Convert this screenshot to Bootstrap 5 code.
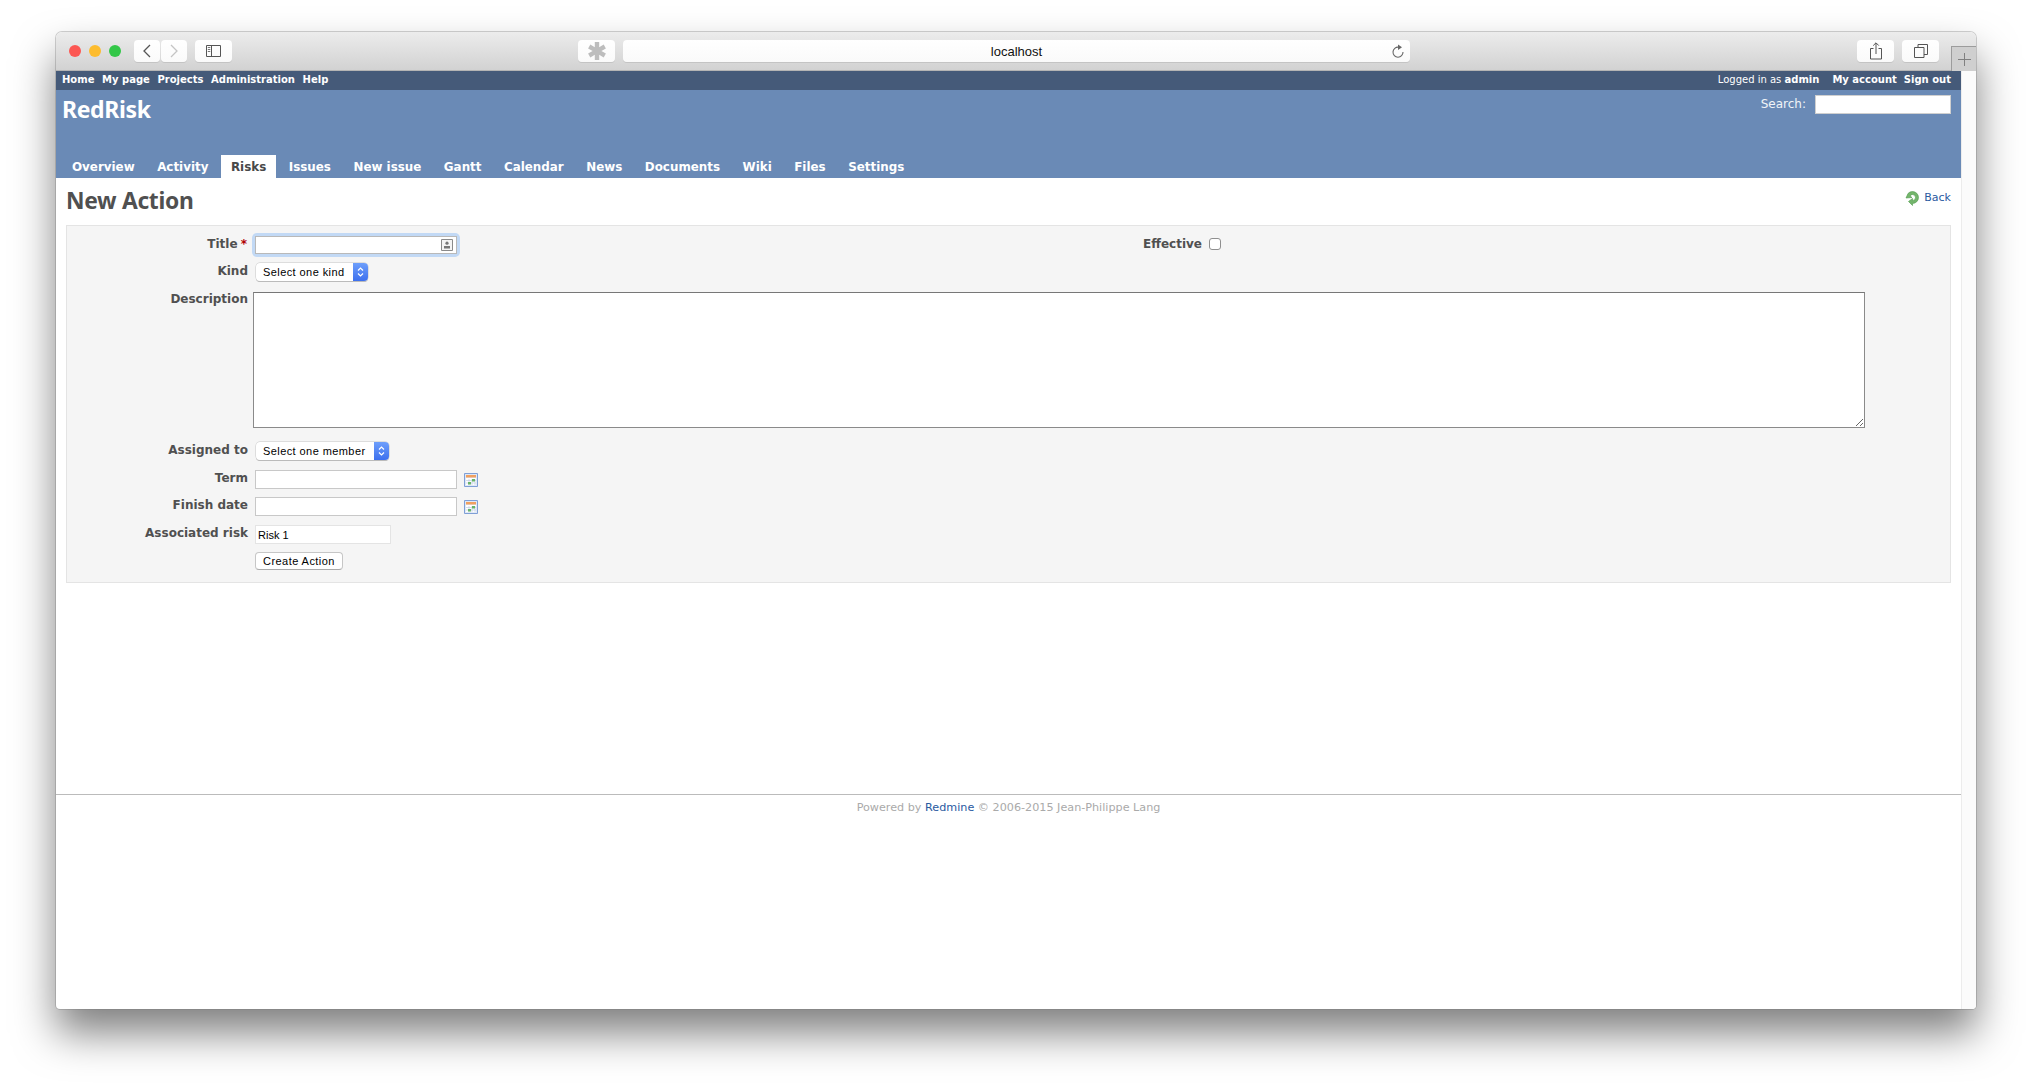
<!DOCTYPE html>
<html lang="en">
<head>
<meta charset="utf-8">
<title>New Action - RedRisk</title>
<link href="https://cdn.jsdelivr.net/npm/bootstrap@5.3.0/dist/css/bootstrap.min.css" rel="stylesheet">
<style>
html,body{height:100%;overflow:hidden}
body{background:#fff;font-family:"DejaVu Sans",Verdana,sans-serif;font-size:12px;color:#484848;padding:32px 0 0 56px}
.appwin{width:1920px;height:977px;background:#fff;border-radius:6px 6px 4px 4px;box-shadow:0 0 0 1px rgba(120,120,120,.35),0 24px 42px rgba(0,0,0,.5);overflow:hidden}
.chrome{height:39px;flex:none;background:linear-gradient(#ececec,#d2d2d2);border-bottom:1px solid #b4b4b4;padding-top:8px;position:relative}
.lights{width:78px;padding-left:13px;gap:8px}
.lamp{width:12px;height:12px;border-radius:50%;margin-top:5px}
.chbtn{height:22px;background:linear-gradient(#fff,#fafafa);border-radius:4px;box-shadow:0 1px 0 #c4c4c4;display:flex;align-items:center;justify-content:center;flex:none}
.urlbar{width:787px;font:13px "Liberation Sans",Arial,sans-serif;color:#111;position:relative;margin-left:8px;padding-top:1px}
.reload{position:absolute;right:5px;top:4px}
.newtab{position:absolute;right:0;top:14px;width:25px;height:25px;background:#cfcfcf;border:1px solid #9c9c9c;border-width:1px 0 0 1px;display:flex;align-items:center;justify-content:center}
.viewport{min-height:0}
.pagecol{width:1905px;flex:none}
.scrollstrip{flex:1;background:#fbfbfb;border-left:1px solid #ececec}
.topbar{height:19px;background:#455a79;color:#fff;font-size:10px;line-height:17px;padding:0 10px 0 6px;flex:none}
.topbar a{color:#fff;font-weight:700;text-decoration:none}
.mastbar{height:88px;background:#6a8ab6;color:#fff;position:relative;flex:none}
.brand{font:700 23px/1 "Noto Sans",sans-serif;padding:8px 0 0 6px;margin:0;letter-spacing:-.35px}
.searchbox{position:absolute;right:10px;top:5px;gap:9px;font-size:12px;color:#f1f4f8}
.searchbox label{position:relative;top:-1px}
.searchbox input{width:136px;height:19px;border:1px solid #cfcfcf;background:#fff;padding:0}
.tabrow{position:absolute;left:6px;bottom:0;gap:2.5px;font-size:11.9px}
.tabrow .nav-link{color:#fff;font-weight:700;padding:0 10px;height:23px;line-height:24px}
.tabrow .nav-link.on{background:#fff;color:#484848}
.pagebody{padding:11px 10px 0;flex:1;min-height:0}
.heading{font:700 22.8px/24px "Noto Sans",sans-serif;color:#505050;margin:0;letter-spacing:-.3px}
.backlink{font-size:11px;color:#2a5a9f;text-decoration:none;gap:5px;padding-top:1px}
.formbox{width:1885px;height:358px;margin-top:14px;background:#f5f5f5;border:1px solid #e4e4e4;padding-top:11px}
.frow{min-height:17px}
.flabel{width:181px;flex:none;text-align:right;font-weight:700;font-size:12px;line-height:15px;margin-right:8px;color:#505050}
.flabel i{color:#b00000;font-style:normal;margin-left:-1px;padding-right:1px}
.flabel.wide{width:193px;margin-right:7px}
.flabel.low{padding-top:1px}
.halfcol{width:942px;flex:none}
.mbxs{margin-bottom:9px}
.txt{height:19px;width:202px;margin-left:-1px;border:1px solid #c8c8c8;background:#fff;padding:0 3px;font:11px "Liberation Sans",Arial,sans-serif;color:#000;outline:0;display:block}
.txt.riskfield{width:136px;border-color:#e4e4e4;padding-left:2px}
.focuswrap{position:relative;width:202px;height:18px;margin:-1px 0 0 -1px;box-shadow:0 0 0 3px #c2d9f5;border-radius:2px}
.focuswrap .txt{height:18px;margin-left:0;border-color:#b9b9b9}
.contact{position:absolute;right:4px;top:3px}
.macsel{display:inline-flex;height:18px;padding:0;border:0;background:#fff;border-radius:4px;box-shadow:0 0 0 .5px #c6c6c6,0 1px 0 #b0b0b0;overflow:hidden;font:11px/18px "Liberation Sans",Arial,sans-serif;color:#000;letter-spacing:.42px}
.macsel span{padding:0 8px 0 7px;white-space:nowrap}
.macsel b{width:15px;background:linear-gradient(#6e9ffb,#3d70ee);display:flex;align-items:center;justify-content:center}
.descbox{width:1612px;height:136px;border:1px solid #8a8a8a;border-top-color:#777;background:#fff;display:block;margin-left:-3px;outline:0}
.submitbtn{height:18px;margin-left:-1px;padding:0 7px;background:#fff;border:1px solid #c6c6c6;border-bottom-color:#aaa;border-radius:4px;font:11px/16px "Liberation Sans",Arial,sans-serif;color:#000;letter-spacing:.45px}
.calpic{margin-left:7px;margin-top:3px}
.checkmark{width:12px;height:12px;margin:1px 0 0;border-color:#8f8f8f;border-radius:2px}
.foot{border-top:1px solid #bbb;height:215px;flex:none;text-align:center;font-size:11.2px;color:#aaa;padding-top:5px}
.foot a{color:#2a5a9f;text-decoration:none}
</style>
</head>
<body>
<div class="appwin d-flex flex-column">
  <div class="chrome d-flex">
    <div class="lights d-flex">
      <span class="lamp" style="background:#fc5753"></span>
      <span class="lamp" style="background:#fdbc2e"></span>
      <span class="lamp" style="background:#33c748"></span>
    </div>
    <div class="chbtn" style="width:26px"><svg width="10" height="14" viewBox="0 0 10 14"><path d="M8 1 2 7l6 6" fill="none" stroke="#555" stroke-width="1.3"/></svg></div>
    <div class="chbtn" style="width:26px;margin-left:1px"><svg width="10" height="14" viewBox="0 0 10 14"><path d="m2 1 6 6-6 6" fill="none" stroke="#c4c4c4" stroke-width="1.3"/></svg></div>
    <div class="chbtn" style="width:37px;margin-left:8px"><svg width="15" height="12" viewBox="0 0 15 12"><path d="M.5.5h14v11H.5zM5.500.5v11" fill="none" stroke="#555"/><path d="M1.800 2.500h2.500M1.800 4.500h2.500M1.800 6.500h2.500" stroke="#777"/></svg></div>
    <div class="chbtn" style="width:37px;margin-left:346px"><svg width="20" height="20" viewBox="0 0 20 20"><path d="M7.800 1h4.400v5.200l4.500-2.600 2.200 3.800L14.400 10l4.500 2.600-2.200 3.800-4.500-2.600V19H7.800v-5.200l-4.500 2.600-2.200-3.800L5.600 10 1.100 7.400l2.200-3.800 4.500 2.600z" fill="#bdbdbd"/></svg></div>
    <div class="chbtn urlbar">localhost
      <svg class="reload" width="14" height="15" viewBox="0 0 14 15"><path d="M7.500 3.200A5 5 0 1 0 12 8" fill="none" stroke="#666" stroke-width="1.100"/><path d="M7 .5 11 3.200 7 6z" fill="#666"/></svg>
    </div>
    <div class="chbtn" style="width:37px;margin-left:447px"><svg width="14" height="18" viewBox="0 0 14 18"><path d="M4.500 6.500H1.500v10.500h11V6.500h-3M7 12V1M4.200 3.600 7 .8l2.800 2.800" fill="none" stroke="#555"/></svg></div>
    <div class="chbtn" style="width:37px;margin-left:8px"><svg width="14" height="14" viewBox="0 0 14 14"><path d="M.5 3.500h9.500v10H.5zM4 3.500v-3h9.500v10H10" fill="none" stroke="#555"/></svg></div>
    <div class="newtab"><svg width="13" height="13" viewBox="0 0 13 13"><path d="M6.500 0v13M0 6.500h13" stroke="#808080"/></svg></div>
  </div>
  <div class="viewport d-flex flex-grow-1">
    <div class="pagecol d-flex flex-column">
      <div class="topbar d-flex justify-content-between">
        <div class="d-flex" style="gap:7.6px"><a href="#">Home</a><a href="#">My page</a><a href="#">Projects</a><a href="#">Administration</a><a href="#">Help</a></div>
        <div class="d-flex"><span>Logged in as <a href="#">admin</a></span><a href="#" style="margin-left:13px">My account</a><a href="#" style="margin-left:7px">Sign out</a></div>
      </div>
      <div class="mastbar">
        <h1 class="brand">RedRisk</h1>
        <form class="searchbox d-flex align-items-center"><label>Search:</label><input type="text" aria-label="Search"></form>
        <ul class="nav tabrow">
          <li class="nav-item"><a class="nav-link" href="#">Overview</a></li>
          <li class="nav-item"><a class="nav-link" href="#">Activity</a></li>
          <li class="nav-item"><a class="nav-link on" href="#">Risks</a></li>
          <li class="nav-item"><a class="nav-link" href="#">Issues</a></li>
          <li class="nav-item"><a class="nav-link" href="#">New issue</a></li>
          <li class="nav-item"><a class="nav-link" href="#">Gantt</a></li>
          <li class="nav-item"><a class="nav-link" href="#">Calendar</a></li>
          <li class="nav-item"><a class="nav-link" href="#">News</a></li>
          <li class="nav-item"><a class="nav-link" href="#">Documents</a></li>
          <li class="nav-item"><a class="nav-link" href="#">Wiki</a></li>
          <li class="nav-item"><a class="nav-link" href="#">Files</a></li>
          <li class="nav-item"><a class="nav-link" href="#">Settings</a></li>
        </ul>
      </div>
      <main class="pagebody">
        <div class="d-flex justify-content-between" style="height:22px">
          <h2 class="heading">New Action</h2>
          <a class="backlink d-inline-flex align-items-start" href="#"><svg width="14" height="16" viewBox="0 0 14 16"><path d="M3 3.500A6 6 0 0 1 7.500 1.500 6 6 0 0 1 13.500 7.500 6 6 0 0 1 7.500 13.500V15.500L3.500 11.500 7.500 8.500V10.500A3 3 0 0 0 10.500 7.500 3 3 0 0 0 7.500 4.500 3 3 0 0 0 5 6L7 7.500 1 8z" fill="#74b56c" stroke="#4f9a4b" stroke-width=".6"/></svg>Back</a>
        </div>
        <form class="formbox">
          <div class="d-flex frow mbxs">
            <div class="halfcol d-flex">
              <label class="flabel">Title <i>*</i></label>
              <div class="focuswrap"><input class="txt" type="text" aria-label="Title">
                <svg class="contact" width="12" height="12" viewBox="0 0 12 12"><path d="M.5.5h11v11H.5z" fill="#f4f4f4" stroke="#8a8a8a"/><circle cx="6" cy="4.200" r="1.600" fill="#777"/><path d="M3 7h6v2.500H3z" fill="#777"/></svg>
              </div>
            </div>
            <div class="d-flex">
              <label class="flabel wide">Effective</label>
              <input type="checkbox" class="form-check-input checkmark" aria-label="Effective">
            </div>
          </div>
          <div class="d-flex mbxs"><label class="flabel low">Kind</label>
            <button type="button" class="macsel"><span>Select one kind</span><b><svg width="7" height="12" viewBox="0 0 7 12"><path d="M1 4.500 3.500 2 6 4.500M1 7.500 3.500 10 6 7.500" fill="none" stroke="#fff" stroke-width="1.200"/></svg></b></button></div>
          <div class="d-flex" style="margin-top:11px"><label class="flabel">Description</label>
            <textarea class="descbox" aria-label="Description"></textarea></div>
          <div class="d-flex" style="margin-top:14px"><label class="flabel low">Assigned to</label>
            <button type="button" class="macsel"><span>Select one member</span><b><svg width="7" height="12" viewBox="0 0 7 12"><path d="M1 4.500 3.500 2 6 4.500M1 7.500 3.500 10 6 7.500" fill="none" stroke="#fff" stroke-width="1.200"/></svg></b></button></div>
          <div class="d-flex" style="margin-top:10px"><label class="flabel low">Term</label><input class="txt" type="text" aria-label="Term">
            <svg class="calpic" width="14" height="14" viewBox="0 0 14 14"><use href="#calico"/></svg></div>
          <div class="d-flex" style="margin-top:8px"><label class="flabel low">Finish date</label><input class="txt" type="text" aria-label="Finish date">
            <svg class="calpic" width="14" height="14" viewBox="0 0 14 14"><use href="#calico"/></svg></div>
          <div class="d-flex" style="margin-top:9px"><label class="flabel low">Associated risk</label><input class="txt riskfield" type="text" value="Risk 1" aria-label="Associated risk"></div>
          <div class="d-flex" style="margin-top:8px"><span class="flabel"></span><button type="button" class="submitbtn">Create Action</button></div>
        </form>
      </main>
      <footer class="foot">Powered by <a href="#">Redmine</a> © 2006-2015 Jean-Philippe Lang</footer>
    </div>
    <div class="scrollstrip"></div>
  </div>
</div>
<svg width="0" height="0" class="d-none"><defs><g id="calico"><path d="M.5.500h13v13H.5z" fill="#dfe8f6" stroke="#7f9fd6"/><path d="M2 2h10v2.500H2z" fill="#f0a060"/><path d="M2 5h10v7H2z" fill="#fff"/><path d="M5 6v6M8 6v6M11 6v6M2 7.500h10M2 10h10" stroke="#b9c6de" stroke-width=".6"/><path d="M4 9h3v2.500H4zM8 6h3v2.500H8z" fill="#68b468"/></g></defs></svg>
</body>
</html>
